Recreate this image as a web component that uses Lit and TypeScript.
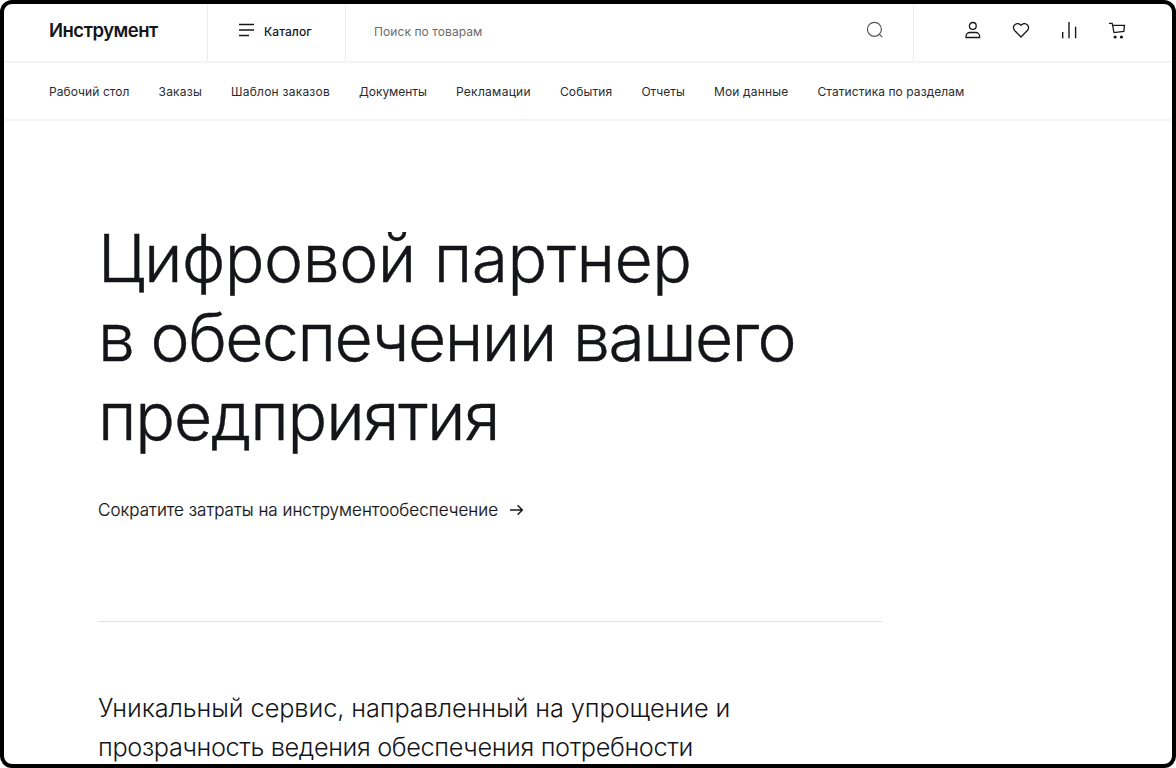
import { LitElement, html, css } from "lit";
import { customElement } from "lit/decorators.js";

interface Tracked {
  text: string;
  track: number;
}

const sections: Tracked[] = [
  { text: "Рабочий стол", track: 0.07 },
  { text: "Заказы", track: 0.22 },
  { text: "Шаблон заказов", track: 0.23 },
  { text: "Документы", track: -0.03 },
  { text: "Рекламации", track: 0.29 },
  { text: "События", track: 0.15 },
  { text: "Отчеты", track: 0.03 },
  { text: "Мои данные", track: 0.17 },
  { text: "Статистика по разделам", track: 0.07 },
];

const headline: Tracked[] = [
  { text: "Цифровой партнер", track: -0.5 },
  { text: "в обеспечении вашего", track: -1.5 },
  { text: "предприятия", track: -1.15 },
];

const lead: Tracked[] = [
  { text: "Уникальный сервис, направленный на упрощение и", track: -0.08 },
  { text: "прозрачность ведения обеспечения потребности", track: -0.36 },
];

const line = (cls: string) => (l: Tracked) =>
  html`<span class=${cls} style="letter-spacing:${l.track}px">${l.text}</span>`;

@customElement("app-root")
export class AppRoot extends LitElement {
  static styles = css`
    :host {
      display: block;
      height: 768px;
      font-family: Inter, "Noto Sans", sans-serif;
      color: #141519;
    }
    .frame {
      box-sizing: border-box;
      height: 768px;
      border: 4px solid #000;
      border-radius: 12px;
      overflow: hidden;
      background: #fff;
    }
    svg {
      display: block;
      fill: none;
      stroke: #17181c;
    }
    .top {
      display: grid;
      grid-template-columns: 204px 138px 568px 1fr;
      height: 57px;
      border-bottom: 2px solid #f4f4f5;
    }
    .cell {
      box-sizing: border-box;
      display: flex;
      align-items: center;
      border-right: 1px solid #ececee;
      white-space: nowrap;
      font-size: 12px;
    }
    .logo {
      padding: 0 0 6px 45px;
      font-size: 18.5px;
      font-weight: 600;
      letter-spacing: -0.5px;
    }
    .catalog {
      padding: 0 0 5px 30px;
      gap: 9px;
      font-weight: 500;
      letter-spacing: 0.07px;
    }
    .label {
      padding-top: 2px;
    }
    .search {
      justify-content: space-between;
      padding: 0 29px 5px 28px;
      color: #6b6b6e;
      letter-spacing: 0.08px;
    }
    .search svg {
      stroke: #55565a;
    }
    .actions {
      gap: 28px;
      padding: 0 0 5px 49px;
      border-right: 0;
    }
    nav {
      display: flex;
      align-items: center;
      gap: 29px;
      height: 56px;
      padding-left: 45px;
      border-bottom: 2px solid #f4f4f5;
      font-size: 12px;
      color: #2a2b2f;
      white-space: nowrap;
    }
    main {
      padding: 98px 0 0 94px;
    }
    h1 {
      margin: 0;
      font-size: 66px;
      line-height: 79.2px;
      font-weight: 300;
      -webkit-text-stroke: 0.4px #141519;
    }
    .row {
      display: block;
      white-space: nowrap;
    }
    .link {
      display: flex;
      align-items: center;
      gap: 11px;
      margin-top: 41px;
      height: 24px;
      font-size: 17px;
      font-weight: 300;
      letter-spacing: 0.02px;
      -webkit-text-stroke: 0.2px #141519;
      white-space: nowrap;
    }
    hr {
      width: 784px;
      height: 1px;
      margin: 99px 0 0;
      border: 0;
      background: #e2e2e4;
    }
    .lead {
      margin: 66px 0 0;
      font-size: 25.3px;
      line-height: 39px;
      font-weight: 300;
    }
  `;

  render() {
    return html`
      <div class="frame">
        <header class="top">
          <div class="cell logo">Инструмент</div>
          <div class="cell catalog">
            <svg width="17" height="18" viewBox="0 0 17 18" stroke-width="1.6">
              <path d="M1 3.5h15M1 9h15M1 14.5h10" />
            </svg>
            <span class="label">Каталог</span>
          </div>
          <div class="cell search">
            <span class="label">Поиск по товарам</span>
            <svg width="18" height="18" viewBox="0 0 18 18" stroke-width="1.2">
              <circle cx="8.4" cy="8.3" r="7" />
              <path d="M13.2 13.2l3 3" />
            </svg>
          </div>
          <div class="cell actions">
            <svg width="20" height="20" viewBox="0 0 20 20" stroke-width="1.3">
              <circle cx="9.8" cy="5.9" r="3.4" />
              <path d="M3 17.5v-1.2a3.8 3.8 0 0 1 3.8-3.8h6a3.8 3.8 0 0 1 3.8 3.8v1.2z" />
            </svg>
            <svg width="20" height="20" viewBox="0 0 20 20" stroke-width="1.3" stroke-linejoin="round">
              <path d="M10 17L3.6 10.5C2.4 9.1 2.2 7 3.2 5.4 4.6 3.3 7.4 3 9.1 4.5L10 5.4l.9-.9c1.7-1.5 4.5-1.2 5.9.9 1 1.6.8 3.7-.4 5.1z" />
            </svg>
            <svg width="20" height="20" viewBox="0 0 20 20" stroke-width="1.4">
              <path d="M3.7 12v6.3M10 2v16.3M16.6 6.8v11.5" />
            </svg>
            <svg width="20" height="20" viewBox="0 0 20 20" stroke-width="1.3">
              <path d="M2 3.3h3.2l1.8 9.3 9.8-1.2.7-6H5.6" />
              <circle cx="8.1" cy="17" r="1.6" fill="#17181c" stroke="none" />
              <circle cx="14.4" cy="17" r="1.6" fill="#17181c" stroke="none" />
            </svg>
          </div>
        </header>
        <nav>${sections.map(line("item"))}</nav>
        <main>
          <h1>${headline.map(line("row"))}</h1>
          <div class="link">
            <span>Сократите затраты на инструментообеспечение</span>
            <svg width="15" height="12" viewBox="0 0 15 12" stroke-width="1.5">
              <path d="M1 6h12.2M8.6 1.3L13.3 6l-4.7 4.7" />
            </svg>
          </div>
          <hr />
          <p class="lead">${lead.map(line("row"))}</p>
        </main>
      </div>
    `;
  }
}
